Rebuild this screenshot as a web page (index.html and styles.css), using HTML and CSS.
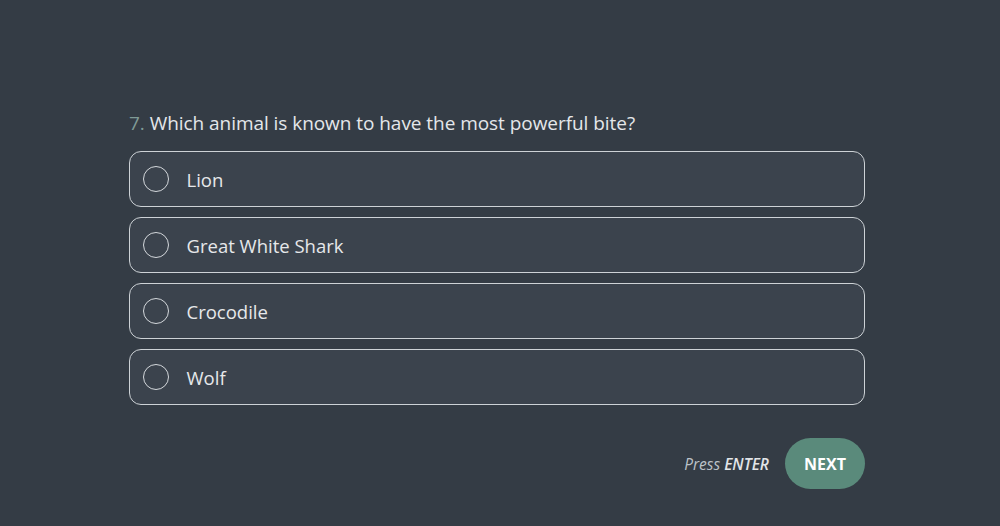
FILE: index.html
```html
<!DOCTYPE html>
<html>
<head>
<meta charset="utf-8">
<link rel="stylesheet" href="styles.css">
</head>
<body>
<main class="quiz">
  <h1 class="question"><span class="num">7.</span> Which animal is known to have the most powerful bite?</h1>
  <div class="options">
    <label class="option"><span class="radio"></span><span class="label">Lion</span></label>
    <label class="option"><span class="radio"></span><span class="label">Great White Shark</span></label>
    <label class="option"><span class="radio"></span><span class="label">Crocodile</span></label>
    <label class="option"><span class="radio"></span><span class="label">Wolf</span></label>
  </div>
  <div class="actions">
    <span class="hint">Press <b>ENTER</b></span>
    <button class="next">NEXT</button>
  </div>
</main>
</body>
</html>
```
FILE: styles.css
```css
html, body {
  margin: 0;
  height: 100%;
}
body {
  background: #343c45;
  font-family: "Open Sans", "Noto Sans", sans-serif;
  color: #e6e8ea;
  padding-right: 6px;
  box-sizing: border-box;
}
.quiz {
  width: 736px;
  margin: 0 auto;
  padding-top: 109px;
}
.question {
  margin: 0 0 14px;
  font-size: 19px;
  font-weight: 400;
  line-height: 28px;
  color: #e4e7ea;
  letter-spacing: -0.05px;
}
.num {
  color: #7f9a96;
}
.options {
  display: flex;
  flex-direction: column;
  gap: 10px;
}
.option {
  display: flex;
  align-items: center;
  height: 56px;
  box-sizing: border-box;
  border: 1.5px solid #cdd2d6;
  border-radius: 12px;
  background: #3b434d;
  padding-left: 12.5px;
}
.radio {
  width: 26px;
  height: 26px;
  border: 1.5px solid #d4d8dc;
  border-radius: 50%;
  box-sizing: border-box;
}
.label {
  margin-left: 18px;
  font-size: 18.5px;
  color: #e6e8ea;
}
.actions {
  display: flex;
  justify-content: flex-end;
  align-items: center;
  gap: 16px;
  margin-top: 33px;
}
.hint {
  font-style: italic;
  font-size: 15.5px;
  color: #bcc2c8;
}
.hint b {
  font-weight: 600;
  color: #e2e5e8;
}
.next {
  width: 80px;
  height: 51px;
  border: none;
  border-radius: 26px;
  background: #5a8a7b;
  color: #ffffff;
  font-family: "Open Sans", "Noto Sans", sans-serif;
  font-weight: 700;
  font-size: 16px;
  padding: 0;
}
```
